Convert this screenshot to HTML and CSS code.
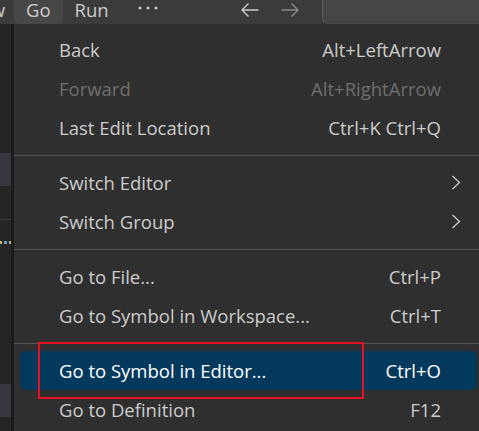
FILE: index.html
```html
<!DOCTYPE html>
<html>
<head>
<meta charset="utf-8">
<link rel="stylesheet" href="styles.css">
</head>
<body>
<div class="page">
  <div class="titlebar">
    <div class="tb-cut"><span>View</span></div>
    <div class="tb-item active">Go</div>
    <div class="tb-item">Run</div>
    <div class="tb-more">
      <svg width="20" height="4" viewBox="0 0 20 4"><circle cx="2" cy="2" r="1.5" fill="#cccccc"/><circle cx="10" cy="2" r="1.5" fill="#cccccc"/><circle cx="18" cy="2" r="1.5" fill="#cccccc"/></svg>
    </div>
    <div class="tb-nav">
      <svg class="arrow" width="20" height="16" viewBox="0 0 20 16"><path d="M18.5 8H2M8.5 1.5L2 8l6.5 6.5" fill="none" stroke="#cccccc" stroke-width="1.4"/></svg>
      <svg class="arrow dim" width="20" height="16" viewBox="0 0 20 16"><path d="M1.5 8H18M11.5 1.5L18 8l-6.5 6.5" fill="none" stroke="#8a8a8a" stroke-width="1.4"/></svg>
    </div>
    <div class="tb-search"></div>
  </div>
  <div class="main">
    <div class="sidebar">
      <div class="sb-sel first"></div>
      <div class="sb-line"></div>
      <div class="sb-dots"><i class="d1"></i><i class="d2"></i><i class="d3"></i></div>
      <div class="sb-sel second"></div>
    </div>
    <div class="edge"></div>
    <div class="menu">
      <div class="item"><span class="label">Back</span><span class="key">Alt+LeftArrow</span><span class="sub"></span></div>
      <div class="item disabled"><span class="label">Forward</span><span class="key">Alt+RightArrow</span><span class="sub"></span></div>
      <div class="item"><span class="label">Last Edit Location</span><span class="key">Ctrl+K Ctrl+Q</span><span class="sub"></span></div>
      <div class="sep"></div>
      <div class="item"><span class="label">Switch Editor</span><span class="key"></span><span class="sub"><svg width="10" height="15" viewBox="0 0 10 15"><path d="M1.5 1L8.5 7.5L1.5 14" fill="none" stroke="#cccccc" stroke-width="1.3"/></svg></span></div>
      <div class="item"><span class="label">Switch Group</span><span class="key"></span><span class="sub"><svg width="10" height="15" viewBox="0 0 10 15"><path d="M1.5 1L8.5 7.5L1.5 14" fill="none" stroke="#cccccc" stroke-width="1.3"/></svg></span></div>
      <div class="sep"></div>
      <div class="item"><span class="label">Go to File...</span><span class="key">Ctrl+P</span><span class="sub"></span></div>
      <div class="item"><span class="label">Go to Symbol in Workspace...</span><span class="key">Ctrl+T</span><span class="sub"></span></div>
      <div class="sep"></div>
      <div class="item selected"><span class="label">Go to Symbol in Editor...</span><span class="key">Ctrl+O</span><span class="sub"></span></div>
      <div class="item"><span class="label">Go to Definition</span><span class="key">F12</span><span class="sub"></span></div>
    </div>
  </div>
  <div class="annot"></div>
</div>
</body>
</html>
```
FILE: styles.css
```css
html, body {
  margin: 0;
  padding: 0;
  background: #2f2f2f;
}
.page {
  position: relative;
  width: 479px;
  height: 431px;
  overflow: hidden;
  font-family: "Open Sans", "Noto Sans", sans-serif;
  color: #cccccc;
}
.titlebar {
  display: flex;
  height: 24px;
  background: #3b3b3b;
  font-size: 18.5px;
  line-height: 19px;
}
.tb-cut {
  width: 14px;
  display: flex;
  justify-content: flex-end;
  overflow: hidden;
  white-space: nowrap;
}
.tb-cut span {
  padding-right: 9px;
  flex-shrink: 0;
}
.tb-item {
  padding: 0 12px;
  height: 24px;
}
.tb-item.active {
  background: #474747;
  border-radius: 0 0 5px 5px;
}
.tb-more {
  display: flex;
  align-items: flex-start;
  padding: 6px 12px 0 17px;
}
.tb-nav {
  display: flex;
  align-items: flex-start;
  gap: 20px;
  padding-top: 2px;
  margin-left: 70px;
}
.tb-search {
  flex: 1;
  margin-left: 22px;
  background: #454545;
  border-left: 1px solid #5e5e5e;
  border-bottom: 1px solid #4a4a4a;
  border-bottom-left-radius: 6px;
  box-sizing: border-box;
}
.main {
  display: flex;
  height: 407px;
}
.sidebar {
  width: 11px;
  flex-shrink: 0;
  background: #252526;
  display: flex;
  flex-direction: column;
}
.sb-sel {
  height: 33px;
  background: #37373d;
}
.sb-sel.first { margin-top: 129px; }
.sb-sel.second { margin-top: 140px; }
.sb-line {
  height: 1px;
  background: #3c3c3c;
  margin-top: 33px;
}
.sb-dots {
  display: flex;
  gap: 2px;
  margin-top: 21px;
  height: 3px;
}
.sb-dots i {
  display: block;
  width: 3px;
  height: 3px;
}
.sb-dots .d1 { background: #c9b36a; }
.sb-dots .d2 { background: #6a9fd6; }
.sb-dots .d3 { background: #c9b36a; }
.edge {
  width: 3px;
  flex-shrink: 0;
  background: #1b1b1b;
}
.menu {
  width: 469px;
  flex-shrink: 0;
  padding-top: 6px;
  background: #2f2f2f;
  font-size: 18.5px;
}
.item {
  display: flex;
  align-items: center;
  height: 39px;
  margin: 0 6px;
  padding-left: 39px;
  border-radius: 6px;
  white-space: nowrap;
}
.item .label { flex: 1; }
.item .sub {
  width: 36px;
  display: flex;
  align-items: center;
  padding-left: 10px;
  box-sizing: border-box;
}
.item.disabled { color: #6e6e6e; }
.item.selected {
  background: #04395e;
  color: #ffffff;
}
.sep {
  height: 1px;
  background: #555555;
  margin: 8px 0 7px;
}
.annot {
  position: absolute;
  left: 38px;
  top: 342px;
  width: 326px;
  height: 57px;
  box-sizing: border-box;
  border: 2px solid #e81123;
}
```
